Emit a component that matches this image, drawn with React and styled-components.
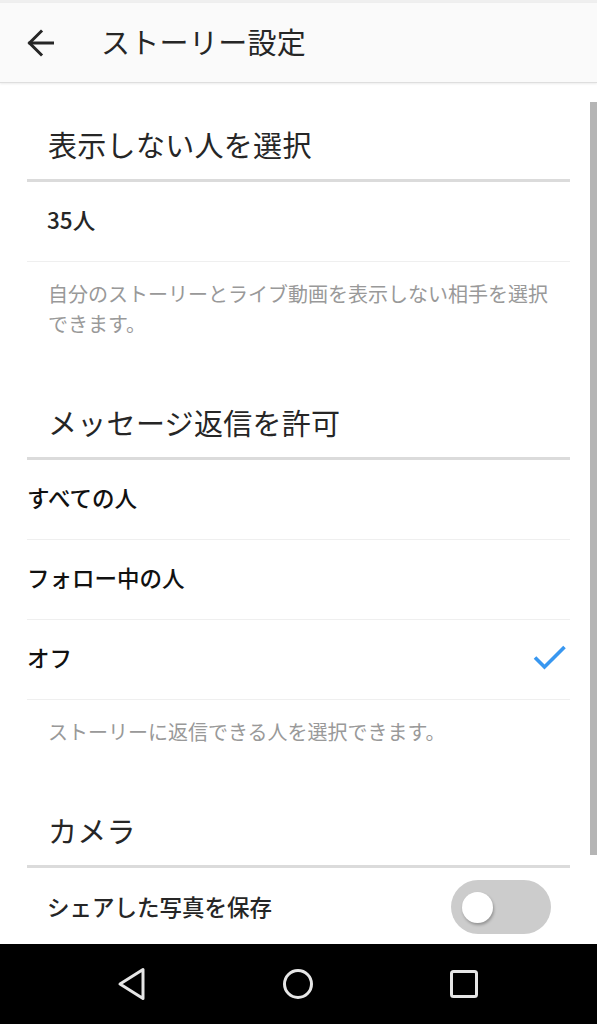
import React from "react";
import styled, { createGlobalStyle } from "styled-components";

const GlobalStyle = createGlobalStyle`
  html, body {
    margin: 0;
    padding: 0;
    background: #ffffff;
  }
  body {
    font-family: "Noto Sans CJK JP", "Noto Sans", Roboto, sans-serif;
    color: #262626;
  }
  * { box-sizing: border-box; }
`;

const Screen = styled.div`
  width: 597px;
  height: 1024px;
  display: flex;
  flex-direction: column;
  overflow: hidden;
  background: #ffffff;
`;

const StatusStrip = styled.div`
  height: 3px;
  flex: none;
  background: #efefef;
`;

const Header = styled.header`
  flex: none;
  height: 80px;
  display: flex;
  align-items: center;
  gap: 47px;
  padding: 0 0 3px 27px;
  background: #fafafa;
  border-bottom: 1px solid #dedede;
  box-shadow: 0 1px 2px rgba(0, 0, 0, 0.08);
  position: relative;
  z-index: 1;
`;

const BackButton = styled.button`
  border: 0;
  padding: 0;
  background: transparent;
  width: 27px;
  height: 28px;
  display: flex;
  align-items: center;
  justify-content: center;
  margin-top: 3px;
`;

const Title = styled.h1`
  margin: 0;
  font-size: 29px;
  font-weight: 400;
  line-height: 40px;
  color: #262626;
  letter-spacing: 0.3px;
`;

const Content = styled.main`
  flex: 1;
  position: relative;
  overflow: hidden;
  padding: 0 27px;
`;

const ScrollThumb = styled.div`
  position: absolute;
  right: 0;
  top: 19px;
  width: 7px;
  height: 753px;
  background: #b5b5b5;
`;

const SectionHeading = styled.h2`
  margin: 0;
  padding: 41px 0 15px 21px;
  font-size: 29px;
  font-weight: 400;
  line-height: 40px;
  color: #262626;
  border-bottom: 3px solid #dbdbdb;
  letter-spacing: 0.3px;
`;

const Row = styled.div`
  height: 80px;
  display: flex;
  align-items: center;
  justify-content: space-between;
  padding-left: ${(p) => (p.$flush ? "0" : "20px")};
  padding-right: ${(p) => (p.$toggle ? "19px" : "3px")};
  padding-bottom: 5px;
  border-bottom: ${(p) => (p.$last ? "0" : "1px solid #efefef")};
`;

const RowLabel = styled.span`
  font-size: 22.5px;
  font-weight: 500;
  line-height: 30px;
  color: ${(p) => (p.$dark ? "#111111" : "#262626")};
`;

const Description = styled.p`
  margin: 0;
  padding: 17px 20px 22px 21px;
  font-size: 20px;
  line-height: 30px;
  color: #999999;
`;

const Toggle = styled.div`
  width: 100px;
  height: 54px;
  border-radius: 27px;
  background: #cccccc;
  display: flex;
  align-items: center;
  padding-left: 11px;
  margin-top: 3px;
`;

const Knob = styled.div`
  width: 31px;
  height: 31px;
  border-radius: 50%;
  background: #ffffff;
  box-shadow: 1px 2px 3px rgba(0, 0, 0, 0.28);
`;

const NavBar = styled.nav`
  flex: none;
  height: 80px;
  background: #000000;
  display: flex;
  align-items: center;
  gap: 135px;
  padding-left: 117px;
  position: relative;
  z-index: 2;
`;

const NavIcon = styled.svg`
  display: block;
  flex: none;
`;

function BackArrow() {
  return (
    <svg width="27" height="28" viewBox="0 0 27 28" fill="none">
      <path d="M25.5 14H3" stroke="#262626" strokeWidth="3" strokeLinecap="square" />
      <path d="M14 2.5L2.5 14L14 25.5" stroke="#262626" strokeWidth="3" strokeLinecap="square" />
    </svg>
  );
}

function Check() {
  return (
    <svg width="34" height="28" viewBox="0 0 34 28" fill="none">
      <path d="M2 14.5L11.5 24L31.5 4" stroke="#3897f0" strokeWidth="3.6" />
    </svg>
  );
}

export default function App() {
  return (
    <>
      <GlobalStyle />
      <Screen>
        <StatusStrip />
        <Header>
          <BackButton aria-label="戻る">
            <BackArrow />
          </BackButton>
          <Title>ストーリー設定</Title>
        </Header>
        <Content>
          <ScrollThumb />
          <SectionHeading>表示しない人を選択</SectionHeading>
          <Row>
            <RowLabel>35人</RowLabel>
          </Row>
          <Description>自分のストーリーとライブ動画を表示しない相手を選択できます。</Description>

          <SectionHeading>メッセージ返信を許可</SectionHeading>
          <Row $flush>
            <RowLabel $dark>すべての人</RowLabel>
          </Row>
          <Row $flush>
            <RowLabel $dark>フォロー中の人</RowLabel>
          </Row>
          <Row $flush>
            <RowLabel $dark>オフ</RowLabel>
            <Check />
          </Row>
          <Description>ストーリーに返信できる人を選択できます。</Description>

          <SectionHeading>カメラ</SectionHeading>
          <Row $toggle $last>
            <RowLabel>シェアした写真を保存</RowLabel>
            <Toggle>
              <Knob />
            </Toggle>
          </Row>
        </Content>
        <NavBar>
          <NavIcon width="30" height="34" viewBox="0 0 30 34" fill="none">
            <path d="M26 2.5V31.5L3 17Z" stroke="#e6e6e6" strokeWidth="3" strokeLinejoin="round" />
          </NavIcon>
          <NavIcon width="32" height="32" viewBox="0 0 32 32" fill="none">
            <circle cx="16" cy="16" r="13.5" stroke="#e6e6e6" strokeWidth="3" />
          </NavIcon>
          <NavIcon width="30" height="30" viewBox="0 0 30 30" fill="none">
            <rect x="2.5" y="2.5" width="25" height="25" rx="2" stroke="#e6e6e6" strokeWidth="3" />
          </NavIcon>
        </NavBar>
      </Screen>
    </>
  );
}
